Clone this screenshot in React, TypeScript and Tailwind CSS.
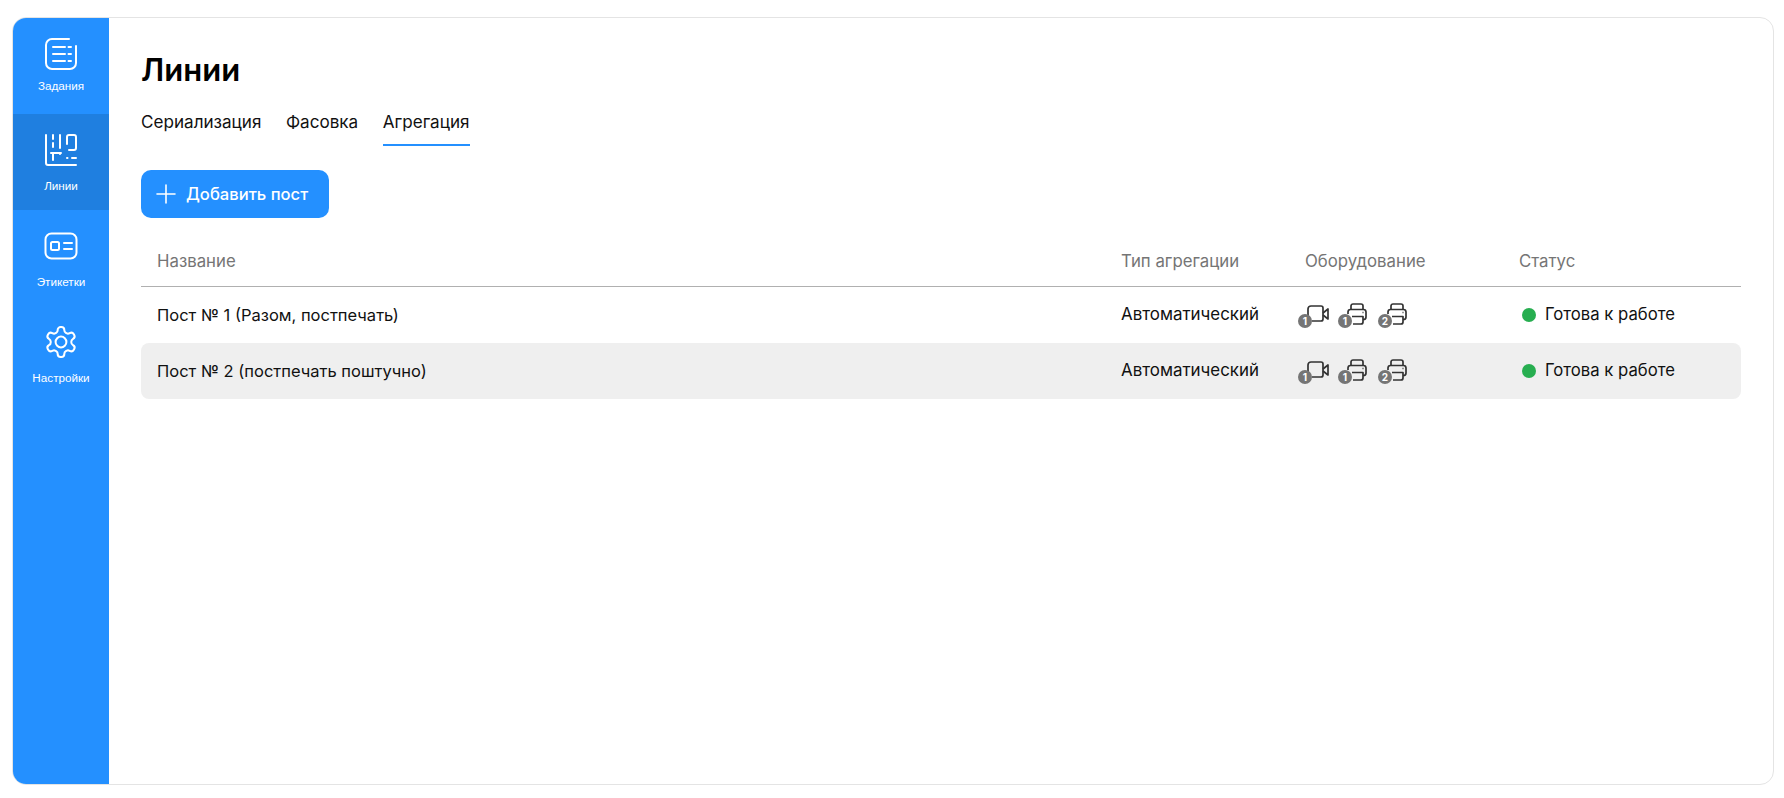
const font = { fontFamily: 'Inter, sans-serif' };

function TasksIcon() {
  return (
    <svg width="34" height="34" viewBox="0 0 34 34" fill="none" stroke="white" strokeWidth="2" strokeLinecap="round">
      <path d="M25 2H8a6 6 0 0 0-6 6v18a6 6 0 0 0 6 6h18a6 6 0 0 0 6-6V9" />
      <path d="M9 10h12M9 17h12M9 24h12M24.5 10h2.5M24.5 17h2.5M24.5 24h2.5" />
    </svg>
  );
}

function LinesIcon() {
  return (
    <svg width="34" height="34" viewBox="0 0 34 34" fill="none" stroke="white" strokeWidth="2" strokeLinecap="round">
      <path d="M2 2v28a2 2 0 0 0 2 2h28" />
      <path d="M9 2v4M9 10v4M16 2v13" />
      <path d="M7 20h10M9 20v7M16 20v1" />
      <path d="M23 11V4a2 2 0 0 1 2-2h5a2 2 0 0 1 2 2v11a2 2 0 0 1-2 2h-5" />
      <path d="M23 25h.5M28 25h4" />
    </svg>
  );
}

function LabelsIcon() {
  return (
    <svg width="34" height="28" viewBox="0 0 34 28" fill="none" stroke="white" strokeWidth="2" strokeLinecap="round">
      <rect x="1.5" y="1.5" width="31" height="25" rx="6" />
      <rect x="7" y="10" width="8" height="8" rx="1.5" />
      <path d="M20 11h8M20 17h8" />
    </svg>
  );
}

function SettingsIcon() {
  return (
    <svg width="36" height="36" viewBox="0 0 24 24" fill="none" stroke="white" strokeWidth="1.35" strokeLinecap="round" strokeLinejoin="round">
      <path d="M12.22 2h-.44a2 2 0 0 0-2 2v.18a2 2 0 0 1-1 1.73l-.43.25a2 2 0 0 1-2 0l-.15-.08a2 2 0 0 0-2.73.73l-.22.38a2 2 0 0 0 .73 2.73l.15.1a2 2 0 0 1 1 1.72v.51a2 2 0 0 1-1 1.74l-.15.09a2 2 0 0 0-.73 2.73l.22.38a2 2 0 0 0 2.73.73l.15-.08a2 2 0 0 1 2 0l.43.25a2 2 0 0 1 1 1.73V20a2 2 0 0 0 2 2h.44a2 2 0 0 0 2-2v-.18a2 2 0 0 1 1-1.73l.43-.25a2 2 0 0 1 2 0l.15.08a2 2 0 0 0 2.73-.73l.22-.39a2 2 0 0 0-.73-2.73l-.15-.08a2 2 0 0 1-1-1.74v-.5a2 2 0 0 1 1-1.74l.15-.09a2 2 0 0 0 .73-2.73l-.22-.38a2 2 0 0 0-2.73-.73l-.15.08a2 2 0 0 1-2 0l-.43-.25a2 2 0 0 1-1-1.73V4a2 2 0 0 0-2-2z" />
      <circle cx="12" cy="12" r="3.6" />
    </svg>
  );
}

function Badge({ n }: { n: number }) {
  return (
    <span className="absolute left-0 bottom-0 w-[14px] h-[14px] rounded-full bg-[#757575] text-white text-[10px] font-bold leading-[14px] text-center">
      {n}
    </span>
  );
}

function CameraIcon({ n }: { n: number }) {
  return (
    <span className="relative block w-[32px] h-[25px]">
      <svg className="absolute left-[8px] top-[1px]" width="24" height="20" viewBox="0 0 24 20" fill="none" stroke="#333" strokeWidth="1.7" strokeLinejoin="round">
        <path d="M2 12V5a3 3 0 0 1 3-3h10a2 2 0 0 1 2 2v11a2 2 0 0 1-2 2H6" />
        <path d="M17 9l5-4v10l-5-4" />
      </svg>
      <Badge n={n} />
    </span>
  );
}

function PrinterIcon({ n }: { n: number }) {
  return (
    <span className="relative block w-[32px] h-[25px]">
      <svg className="absolute left-[8px] top-0" width="22" height="22" viewBox="0 0 22 22" fill="none" stroke="#333" strokeWidth="1.7" strokeLinejoin="round">
        <path d="M5 7V3a2 2 0 0 1 2-2h8a2 2 0 0 1 2 2v4" />
        <path d="M2 11V9a2.5 2.5 0 0 1 2.5-2.5h13A2.5 2.5 0 0 1 20 9v5a2.5 2.5 0 0 1-2.5 2.5H17" />
        <path d="M6 13.5h11V19a2 2 0 0 1-2 2H7" />
        <path d="M16.5 9.5h1" />
      </svg>
      <Badge n={n} />
    </span>
  );
}

const navItems = [
  { label: 'Задания', icon: <TasksIcon />, active: false, gap: 'mt-[6px]' },
  { label: 'Линии', icon: <LinesIcon />, active: true, gap: 'mt-[10px]' },
  { label: 'Этикетки', icon: <LabelsIcon />, active: false, gap: 'mt-[10px]' },
  { label: 'Настройки', icon: <SettingsIcon />, active: false, gap: 'mt-[10px]' },
];

const rows = [
  { name: 'Пост № 1 (Разом, постпечать)', hover: false },
  { name: 'Пост № 2 (постпечать поштучно)', hover: true },
];

const cols = 'grid grid-cols-[964px_184px_214px_1fr]';

export default function App() {
  return (
    <div className="w-[1784px] h-[798px] bg-white pt-[17px] pr-[10px] pb-[13px] pl-[12px] overflow-hidden" style={font}>
      <div className="h-full flex border border-[#e4e4e4] rounded-[14px] overflow-hidden">
        <nav className="w-[96px] shrink-0 bg-[#2490ff] text-white">
          {navItems.map((item) => (
            <div
              key={item.label}
              className={`h-[96px] flex flex-col items-center pt-[18px] ${item.active ? 'bg-[#1f7fe0]' : ''}`}
            >
              <div className="h-[36px] flex items-center justify-center">{item.icon}</div>
              <div className={`${item.gap} text-[11.7px] leading-[16px] font-['Liberation_Sans',sans-serif]`}>{item.label}</div>
            </div>
          ))}
        </nav>
        <main className="flex-1 pl-[32px] pr-[32px] pt-[32px] text-[#111]">
          <h1 className="text-[31px] leading-[40px] font-semibold text-black">Линии</h1>
          <div className="mt-[20px] flex gap-[24.5px] text-[17.1px] leading-[24px]">
            <div className="h-[36px]">Сериализация</div>
            <div className="h-[36px]">Фасовка</div>
            <div className="h-[36px] border-b-2 border-[#2490ff]">Агрегация</div>
          </div>
          <button className="mt-[24px] h-[48px] w-[188px] rounded-[10px] bg-[#2490ff] text-white flex items-center pl-[15px] gap-[10px] text-[16.6px] font-medium">
            <svg width="20" height="20" viewBox="0 0 20 20" stroke="white" strokeWidth="1.6" strokeLinecap="round">
              <path d="M10 1v18M1 10h18" />
            </svg>
            Добавить пост
          </button>
          <div className={`${cols} mt-[20px] h-[49px] items-center px-[16px] text-[16.8px] text-[#757575] border-b border-[#b0b0b0]`}>
            <div>Название</div>
            <div>Тип агрегации</div>
            <div>Оборудование</div>
            <div>Статус</div>
          </div>
          {rows.map((row) => (
            <div
              key={row.name}
              className={`${cols} h-[56px] items-center px-[16px] text-[16.5px] rounded-[8px] ${row.hover ? 'bg-[#efefef]' : ''}`}
            >
              <div>{row.name}</div>
              <div className="text-[16.9px]">Автоматический</div>
              <div className="flex items-center gap-[8px] -ml-[7px]">
                <CameraIcon n={1} />
                <PrinterIcon n={1} />
                <PrinterIcon n={2} />
              </div>
              <div className="flex items-center gap-[9px] pl-[3px] text-[16.7px]">
                <span className="w-[14px] h-[14px] rounded-full bg-[#27ae50]" />
                Готова к работе
              </div>
            </div>
          ))}
        </main>
      </div>
    </div>
  );
}
